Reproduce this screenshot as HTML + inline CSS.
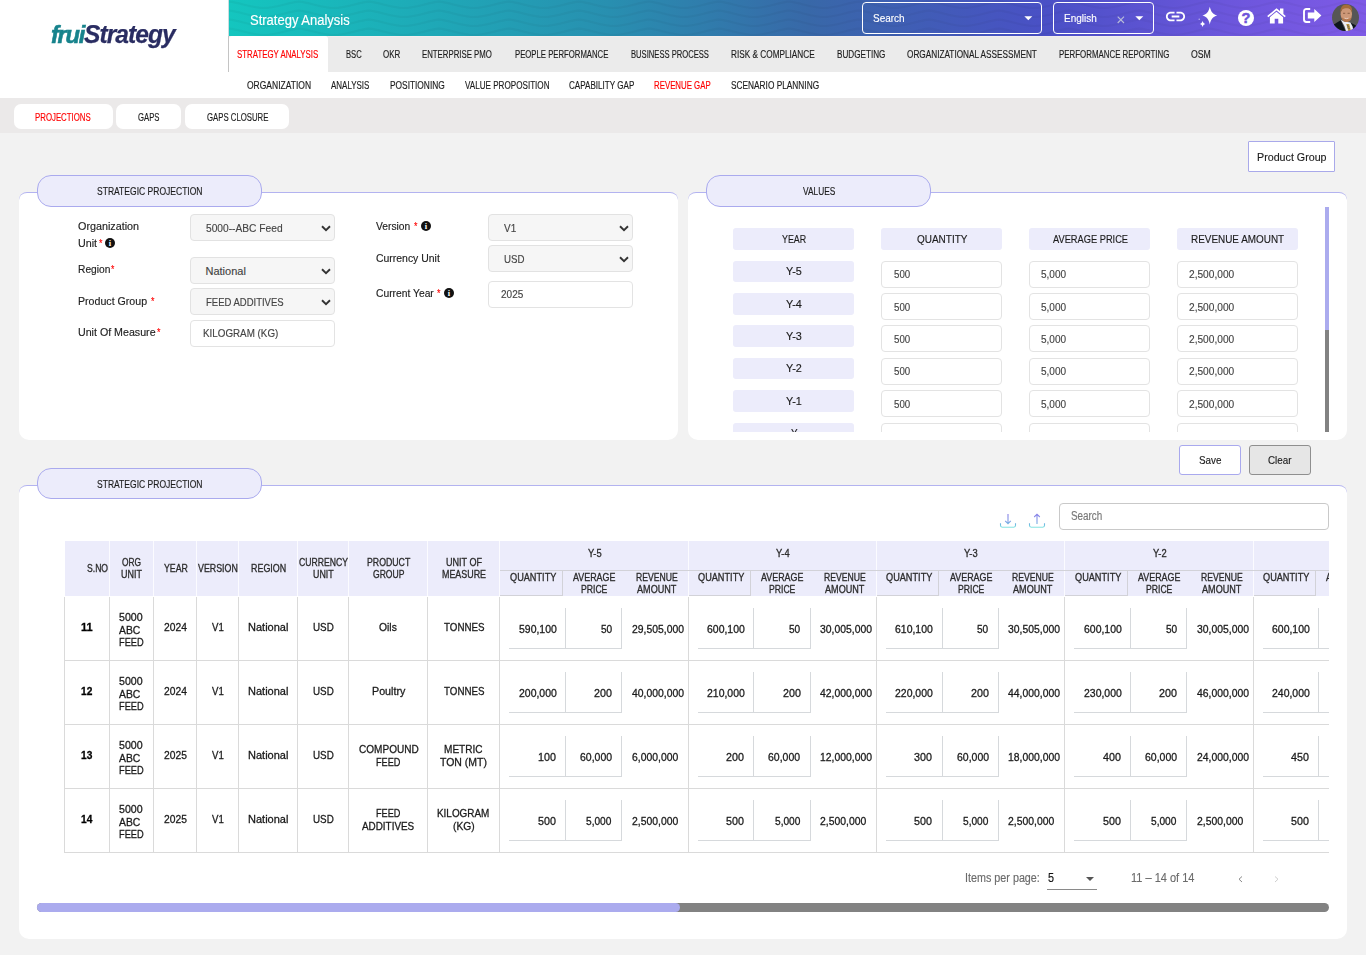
<!DOCTYPE html>
<html lang="en"><head><meta charset="utf-8"><title>fruiStrategy - Strategy Analysis - Revenue Gap</title>
<style>
html,body{margin:0;padding:0}
body{width:1366px;height:955px;overflow:hidden;background:#f2f2f2;position:relative;font-family:"Liberation Sans",sans-serif;}
div,span,a,b,label,h1,th,td,button{position:absolute;box-sizing:border-box;margin:0;padding:0}
.t{white-space:pre;line-height:1;transform-origin:0 0;font-weight:400;text-decoration:none;display:block}
svg{position:absolute;overflow:visible}

.t{-webkit-text-stroke:0.15px currentColor}
.tb .t{-webkit-text-stroke:0.3px currentColor}
.hv .t{-webkit-text-stroke:0.2px currentColor}

.sel{background:#f6f6f6;border:1px solid #e2e2e2;border-radius:4px}
.inp{background:#fff;border:1px solid #e3e3e3;border-radius:4px}
.hd{background:#ececfb;border-radius:3px}
.leg{background:#ececfb;border:1px solid #aaaaee;border-radius:14px}
.card{background:#fff;border-radius:8px 8px 10px 10px;border-top:1px solid #b3b3f0}

</style></head><body>
<header>
<div style="left:0px;top:0px;width:1366px;height:98px;background:#fff;"></div>
<div style="left:229px;top:0px;width:1137px;height:36px;background:linear-gradient(90deg,#14c6bf 0%,#288fb0 33.5%,#3868a8 51%,#4a50c6 72%,#6c56dc 88%,#7e5ae6 100%);"></div>
<div style="left:228px;top:0px;width:1px;height:36px;background:#c9dde0;"></div>
<svg style="left:229px;top:0" width="1137" height="36" viewBox="0 0 1137 36"><defs><pattern id="wv" width="70" height="9" patternUnits="userSpaceOnUse"><path d="M-2 1.5C10 1.5 20 8 35 8S60 1.5 72 1.5" fill="none" stroke="#000" stroke-opacity="0.035" stroke-width="2.2"/><path d="M-2 10.5C10 10.5 20 17 35 17S60 10.5 72 10.5M-2 -7.5C10 -7.5 20 -1 35 -1S60 -7.5 72 -7.5" fill="none" stroke="#000" stroke-opacity="0.035" stroke-width="2.2"/></pattern></defs><rect width="1137" height="36" fill="url(#wv)"/></svg>
<div style="left:229px;top:36px;width:1137px;height:36px;background:#ebebeb;"></div>
<div style="left:228px;top:36px;width:1px;height:36px;background:#c4c4c4;"></div>
<div style="left:229px;top:36px;width:99px;height:36px;background:#fff;border-radius:3px 3px 0 0;"></div>
<div style="left:0px;top:98px;width:1366px;height:35px;background:#ebe9e9;"></div>
<div style="left:328px;top:36px;width:1038px;height:1px;background:#f3eeee;"></div>
<span class="t" style="left:51.30px;top:23.60px;font-size:23.5px;color:#17838c;transform:scaleX(1.0086);font-weight:700;font-style:italic;letter-spacing:-1.3px;-webkit-text-stroke:0.55px #17838c;">frui</span>
<span class="t" style="left:84.40px;top:20.60px;font-size:26px;color:#2a2d62;transform:scaleX(0.9439);font-weight:700;font-style:italic;letter-spacing:-1px;-webkit-text-stroke:0.25px #2a2d62;">Strategy</span>
<h1 class="t" style="left:249.75px;top:13.00px;font-size:14px;color:#fff;transform:scaleX(0.9282);">Strategy Analysis</h1>
<a class="t" style="left:236.75px;top:50.25px;font-size:10px;color:#ff0000;transform:scaleX(0.7861);">STRATEGY ANALYSIS</a>
<a class="t" style="left:346.00px;top:50.25px;font-size:10px;color:#1c1c1c;transform:scaleX(0.7625);">BSC</a>
<a class="t" style="left:383.00px;top:50.25px;font-size:10px;color:#1c1c1c;transform:scaleX(0.7955);">OKR</a>
<a class="t" style="left:422.00px;top:50.25px;font-size:10px;color:#1c1c1c;transform:scaleX(0.7806);">ENTERPRISE PMO</a>
<a class="t" style="left:514.50px;top:50.25px;font-size:10px;color:#1c1c1c;transform:scaleX(0.7744);">PEOPLE PERFORMANCE</a>
<a class="t" style="left:630.75px;top:50.25px;font-size:10px;color:#1c1c1c;transform:scaleX(0.7623);">BUSINESS PROCESS</a>
<a class="t" style="left:731.00px;top:50.25px;font-size:10px;color:#1c1c1c;transform:scaleX(0.8235);">RISK &amp; COMPLIANCE</a>
<a class="t" style="left:837.00px;top:50.25px;font-size:10px;color:#1c1c1c;transform:scaleX(0.8136);">BUDGETING</a>
<a class="t" style="left:906.75px;top:50.25px;font-size:10px;color:#1c1c1c;transform:scaleX(0.8228);">ORGANIZATIONAL ASSESSMENT</a>
<a class="t" style="left:1059.00px;top:50.25px;font-size:10px;color:#1c1c1c;transform:scaleX(0.7893);">PERFORMANCE REPORTING</a>
<a class="t" style="left:1191.00px;top:50.25px;font-size:10px;color:#1c1c1c;transform:scaleX(0.8696);">OSM</a>
<a class="t" style="left:246.75px;top:81.25px;font-size:10px;color:#1c1c1c;transform:scaleX(0.8500);">ORGANIZATION</a>
<a class="t" style="left:331.00px;top:81.25px;font-size:10px;color:#1c1c1c;transform:scaleX(0.7969);">ANALYSIS</a>
<a class="t" style="left:390.00px;top:81.25px;font-size:10px;color:#1c1c1c;transform:scaleX(0.8346);">POSITIONING</a>
<a class="t" style="left:464.50px;top:81.25px;font-size:10px;color:#1c1c1c;transform:scaleX(0.8101);">VALUE PROPOSITION</a>
<a class="t" style="left:568.50px;top:81.25px;font-size:10px;color:#1c1c1c;transform:scaleX(0.8086);">CAPABILITY GAP</a>
<a class="t" style="left:654.00px;top:81.25px;font-size:10px;color:#ff0000;transform:scaleX(0.7847);">REVENUE GAP</a>
<a class="t" style="left:731.00px;top:81.25px;font-size:10px;color:#1c1c1c;transform:scaleX(0.8302);">SCENARIO PLANNING</a>
<div style="left:862px;top:2px;width:180px;height:32px;border:1px solid #fff;border-radius:4px;"></div>
<span class="t" style="left:872.50px;top:13.00px;font-size:11.5px;color:#fff;transform:scaleX(0.8681);">Search</span>
<svg style="left:1024px;top:16px" width="9" height="5"><path d="M0.3 0.3H8.3L4.3 4.3Z" fill="#fff"/></svg>
<div style="left:1053px;top:2px;width:101px;height:32px;border:1px solid #fff;border-radius:4px;"></div>
<span class="t" style="left:1064.00px;top:13.00px;font-size:11.5px;color:#fff;transform:scaleX(0.8684);">English</span>
<svg style="left:1117px;top:16px" width="8" height="8"><path d="M0.7 0.7L7 7M7 0.7L0.7 7" stroke="#b9bdd8" stroke-width="1.1" fill="none"/></svg>
<svg style="left:1135px;top:16px" width="9" height="5"><path d="M0.3 0.3H8.3L4.3 4.3Z" fill="#fff"/></svg>
<svg style="left:1164.2px;top:4.9px" width="23" height="23" viewBox="0 0 24 24"><path fill="#fff" d="M3.9 12c0-1.71 1.39-3.1 3.1-3.1h4V7H7c-2.76 0-5 2.24-5 5s2.24 5 5 5h4v-1.9H7c-1.71 0-3.1-1.39-3.1-3.1zM8 13h8v-2H8v2zm9-6h-4v1.9h4c1.71 0 3.1 1.39 3.1 3.1s-1.39 3.1-3.1 3.1h-4V17h4c2.76 0 5-2.24 5-5s-2.24-5-5-5z"/></svg>
<svg style="left:1196px;top:4px" width="24" height="24" viewBox="0 0 24 24"><path fill="#fff" d="M13.80 2.70C15.06 7.86 16.61 10.09 21.20 11.60C16.61 13.11 15.06 15.34 13.80 20.50C12.54 15.34 10.99 13.11 6.40 11.60C10.99 10.09 12.54 7.86 13.80 2.70Z M6.60 16.70C7.06 18.56 7.63 19.36 9.30 19.90C7.63 20.44 7.06 21.24 6.60 23.10C6.14 21.24 5.57 20.44 3.90 19.90C5.57 19.36 6.14 18.56 6.60 16.70Z"/><circle cx="3.2" cy="15.2" r="0.7" fill="#fff" opacity=".6"/></svg>
<svg style="left:1238px;top:9.8px" width="16" height="16" viewBox="0 0 16 16"><circle cx="8" cy="8" r="8" fill="#fff"/><text x="8" y="13.2" font-size="14.5" font-weight="700" text-anchor="middle" fill="#6e54da" stroke="#6e54da" stroke-width="0.5" font-family="Liberation Sans, sans-serif">?</text></svg>
<svg style="left:1267px;top:7.6px" width="19" height="16" viewBox="0 0 19 16"><path fill="#fff" d="M9.5 0.2L0.2 8L1.3 9.3L9.5 2.5L17.7 9.3L18.8 8L16.4 5.9V0.6H13V3.1Z"/><path fill="#fff" d="M9.5 3.7L2.9 9.2V15.6H7.7V10.8H11.3V15.6H16.1V9.2Z"/></svg>
<svg style="left:1302.6px;top:8.2px" width="19" height="15" viewBox="0 0 19 15"><path fill="none" stroke="#fff" stroke-width="1.9" d="M7.2 1H3.4C2 1 1 2 1 3.4V11.6C1 13 2 14 3.4 14H7.2"/><path fill="#fff" d="M4.8 4.6H11.3V0.9L18.4 7.5L11.3 14.1V10.4H4.8Z"/></svg>
<svg style="left:1332px;top:4px" width="27" height="27" viewBox="0 0 27 27"><defs><clipPath id="av"><circle cx="13.5" cy="13.5" r="13.5"/></clipPath><filter id="bl" x="-10%" y="-10%" width="120%" height="120%"><feGaussianBlur stdDeviation="0.45"/></filter></defs>
<g clip-path="url(#av)"><rect width="27" height="27" fill="#565656"/><g filter="url(#bl)">
<path d="M-1 23L2.2 20.2L8.7 16.2L14 28H-1Z M18.3 18.4L23.9 21.6L28 25V28H15Z" fill="#10141c"/>
<path d="M8.9 15.8L12 17.5L18.4 18.4L20.6 22.5L21.5 27.5H14.2L12.4 22Z" fill="#eceef4"/>
<path d="M14.3 20.1L17.2 20.1L19 27H16.3Z" fill="#b99438"/>
<path d="M15 21.5L17 22.5M15.6 23.8L17.8 24.8" stroke="#3d4a6a" stroke-width="0.7"/>
<ellipse cx="14.3" cy="10.2" rx="5.7" ry="7" fill="#cd9878"/>
<path d="M9.4 12.2C10 17.3 12.3 17.9 14.6 17.9C17 17.9 19.4 16.8 19.8 12.2C18.8 14.6 17 15 14.6 15C12.2 15 10.6 14.6 9.4 12.2Z" fill="#b5794f"/>
<path d="M8.7 9C7.8 3.5 10.6 0.6 14.2 0.5C18.4 0.5 20.9 3.4 20 9C19.5 6.3 18.6 4.8 16.8 4.4C14.5 4 12 4.1 10.4 5.2C9.4 6.1 9 7.4 8.7 9Z" fill="#a66d38"/>
<path d="M11 9.3H13.2M15.6 9.3H17.8" stroke="#7b5238" stroke-width="0.8"/>
<path d="M12.6 14.1Q14.5 15.3 16.4 14.1" stroke="#f3e4dc" stroke-width="0.7" fill="none"/>
</g></g></svg>
</header>
<nav>
<div style="left:14px;top:104px;width:99px;height:25px;background:#fff;border-radius:7px;"></div>
<div style="left:116px;top:104px;width:65px;height:25px;background:#fff;border-radius:7px;"></div>
<div style="left:185px;top:104px;width:104px;height:25px;background:#fff;border-radius:7px;"></div>
<a class="t" style="left:35.10px;top:113.00px;font-size:10px;color:#ff0000;transform:scaleX(0.7831);">PROJECTIONS</a>
<a class="t" style="left:137.90px;top:113.00px;font-size:10px;color:#1c1c1c;transform:scaleX(0.7714);">GAPS</a>
<a class="t" style="left:206.50px;top:113.00px;font-size:10px;color:#1c1c1c;transform:scaleX(0.7785);">GAPS CLOSURE</a>
</nav>
<main>
<div style="left:1248px;top:141px;width:87px;height:31px;background:#fff;border:1px solid #a9a9ea;border-radius:1px;"></div>
<button class="t" style="left:1257.00px;top:152.00px;font-size:11.5px;color:#1c1c1c;transform:scaleX(0.9300);background:none;border:0;font-family:inherit;">Product Group</button>
<section>
<div class="card" style="left:19px;top:192px;width:659px;height:248px;"></div>
<div class="leg" style="left:37px;top:175px;width:225px;height:32px;"></div>
<span class="t" style="left:96.75px;top:187.00px;font-size:10px;color:#1c1c1c;transform:scaleX(0.8528);">STRATEGIC PROJECTION</span>
<label class="t" style="left:78.00px;top:220.50px;font-size:11px;color:#222;transform:scaleX(0.9798);">Organization</label>
<label class="t" style="left:78.00px;top:237.75px;font-size:11px;color:#222;transform:scaleX(0.9750);">Unit</label>
<span class="t" style="left:98.50px;top:237.75px;font-size:11px;color:#ff0000;transform:scaleX(0.8000);">*</span>
<svg style="left:105px;top:238.3px" width="10" height="10" viewBox="0 0 10 10"><circle cx="5" cy="5" r="5" fill="#111"/><text x="5" y="8" font-size="8.6" font-weight="700" text-anchor="middle" fill="#fff" font-family="Liberation Serif, serif">i</text></svg>
<label class="t" style="left:78.00px;top:264.00px;font-size:11px;color:#222;transform:scaleX(0.9286);">Region</label>
<span class="t" style="left:111.30px;top:264.00px;font-size:11px;color:#ff0000;transform:scaleX(0.7800);">*</span>
<label class="t" style="left:78.00px;top:296.00px;font-size:11px;color:#222;transform:scaleX(0.9653);">Product Group</label>
<span class="t" style="left:150.50px;top:296.00px;font-size:11px;color:#ff0000;transform:scaleX(0.8000);">*</span>
<label class="t" style="left:78.00px;top:327.25px;font-size:11px;color:#222;transform:scaleX(0.9688);">Unit Of Measure</label>
<span class="t" style="left:156.50px;top:327.25px;font-size:11px;color:#ff0000;transform:scaleX(0.8000);">*</span>
<div class="sel" style="left:190px;top:214px;width:145px;height:27px;"></div>
<span class="t" style="left:205.50px;top:223.00px;font-size:11px;color:#444;transform:scaleX(0.9277);">5000--ABC Feed</span>
<svg style="left:321px;top:224.5px" width="10" height="7" viewBox="0 0 10 7"><path d="M1 1.2L5 5.1L9 1.2" stroke="#333" stroke-width="1.9" fill="none"/></svg>
<div class="sel" style="left:190px;top:257px;width:145px;height:27px;"></div>
<span class="t" style="left:205.50px;top:266.25px;font-size:11px;color:#444;">National</span>
<svg style="left:321px;top:267.5px" width="10" height="7" viewBox="0 0 10 7"><path d="M1 1.2L5 5.1L9 1.2" stroke="#333" stroke-width="1.9" fill="none"/></svg>
<div class="sel" style="left:190px;top:288px;width:145px;height:27px;"></div>
<span class="t" style="left:205.50px;top:296.75px;font-size:11px;color:#444;transform:scaleX(0.8639);">FEED ADDITIVES</span>
<svg style="left:321px;top:298.5px" width="10" height="7" viewBox="0 0 10 7"><path d="M1 1.2L5 5.1L9 1.2" stroke="#333" stroke-width="1.9" fill="none"/></svg>
<div class="inp" style="left:190px;top:320px;width:145px;height:27px;"></div>
<span class="t" style="left:202.50px;top:327.80px;font-size:11px;color:#444;transform:scaleX(0.8929);">KILOGRAM (KG)</span>
<label class="t" style="left:375.50px;top:220.50px;font-size:11px;color:#222;transform:scaleX(0.9324);">Version</label>
<span class="t" style="left:414.00px;top:220.50px;font-size:11px;color:#ff0000;transform:scaleX(0.8000);">*</span>
<svg style="left:420.8px;top:220.6px" width="10" height="10" viewBox="0 0 10 10"><circle cx="5" cy="5" r="5" fill="#111"/><text x="5" y="8" font-size="8.6" font-weight="700" text-anchor="middle" fill="#fff" font-family="Liberation Serif, serif">i</text></svg>
<label class="t" style="left:375.50px;top:253.00px;font-size:11px;color:#222;transform:scaleX(0.9485);">Currency Unit</label>
<label class="t" style="left:375.50px;top:288.00px;font-size:11px;color:#222;transform:scaleX(0.9355);">Current Year</label>
<span class="t" style="left:437.00px;top:288.00px;font-size:11px;color:#ff0000;transform:scaleX(0.8000);">*</span>
<svg style="left:444.3px;top:288px" width="10" height="10" viewBox="0 0 10 10"><circle cx="5" cy="5" r="5" fill="#111"/><text x="5" y="8" font-size="8.6" font-weight="700" text-anchor="middle" fill="#fff" font-family="Liberation Serif, serif">i</text></svg>
<div class="sel" style="left:488px;top:214px;width:145px;height:27px;"></div>
<span class="t" style="left:503.50px;top:223.00px;font-size:11px;color:#444;transform:scaleX(0.9038);">V1</span>
<svg style="left:619px;top:224.5px" width="10" height="7" viewBox="0 0 10 7"><path d="M1 1.2L5 5.1L9 1.2" stroke="#333" stroke-width="1.9" fill="none"/></svg>
<div class="sel" style="left:488px;top:245px;width:145px;height:27px;"></div>
<span class="t" style="left:503.50px;top:254.00px;font-size:11px;color:#444;transform:scaleX(0.8804);">USD</span>
<svg style="left:619px;top:255.5px" width="10" height="7" viewBox="0 0 10 7"><path d="M1 1.2L5 5.1L9 1.2" stroke="#333" stroke-width="1.9" fill="none"/></svg>
<div class="inp" style="left:488px;top:281px;width:145px;height:27px;"></div>
<span class="t" style="left:500.50px;top:288.50px;font-size:11px;color:#444;transform:scaleX(0.9100);">2025</span>
</section>
<section>
<div class="card" style="left:688px;top:192px;width:659px;height:248px;"></div>
<div class="leg" style="left:706px;top:175px;width:225px;height:32px;"></div>
<span class="t" style="left:803.00px;top:187.00px;font-size:10px;color:#1c1c1c;transform:scaleX(0.8333);">VALUES</span>
<div style="left:688px;top:207px;width:642px;height:224.8px;overflow:hidden">
<div class="hd" style="left:45px;top:21px;width:121px;height:22px;"></div>
<span class="t" style="left:94.25px;top:27.25px;font-size:11px;color:#1c1c1c;transform:scaleX(0.8083);">YEAR</span>
<div class="hd" style="left:193px;top:21px;width:121px;height:22px;"></div>
<span class="t" style="left:228.75px;top:27.25px;font-size:11px;color:#1c1c1c;transform:scaleX(0.9062);">QUANTITY</span>
<div class="hd" style="left:341px;top:21px;width:121px;height:22px;"></div>
<span class="t" style="left:364.50px;top:27.25px;font-size:11px;color:#1c1c1c;transform:scaleX(0.8427);">AVERAGE PRICE</span>
<div class="hd" style="left:489px;top:21px;width:121px;height:22px;"></div>
<span class="t" style="left:503.25px;top:27.25px;font-size:11px;color:#1c1c1c;transform:scaleX(0.9014);">REVENUE AMOUNT</span>
<div class="hd" style="left:45px;top:54px;width:121px;height:21px;"></div>
<span class="t" style="left:98.00px;top:59.00px;font-size:11px;color:#1c1c1c;transform:scaleX(0.9844);">Y-5</span>
<div class="inp" style="left:193px;top:54px;width:121px;height:27px;"></div>
<span class="t" style="left:206.25px;top:62.00px;font-size:11px;color:#444;transform:scaleX(0.8816);">500</span>
<div class="inp" style="left:341px;top:54px;width:121px;height:27px;"></div>
<span class="t" style="left:353.25px;top:62.00px;font-size:11px;color:#444;transform:scaleX(0.9107);">5,000</span>
<div class="inp" style="left:489px;top:54px;width:121px;height:27px;"></div>
<span class="t" style="left:501.25px;top:62.00px;font-size:11px;color:#444;transform:scaleX(0.9235);">2,500,000</span>
<div class="hd" style="left:45px;top:86px;width:121px;height:22px;"></div>
<span class="t" style="left:98.00px;top:92.00px;font-size:11px;color:#1c1c1c;transform:scaleX(0.9844);">Y-4</span>
<div class="inp" style="left:193px;top:86px;width:121px;height:27px;"></div>
<span class="t" style="left:206.25px;top:94.75px;font-size:11px;color:#444;transform:scaleX(0.8816);">500</span>
<div class="inp" style="left:341px;top:86px;width:121px;height:27px;"></div>
<span class="t" style="left:353.25px;top:94.75px;font-size:11px;color:#444;transform:scaleX(0.9107);">5,000</span>
<div class="inp" style="left:489px;top:86px;width:121px;height:27px;"></div>
<span class="t" style="left:501.25px;top:94.75px;font-size:11px;color:#444;transform:scaleX(0.9235);">2,500,000</span>
<div class="hd" style="left:45px;top:118px;width:121px;height:22px;"></div>
<span class="t" style="left:98.00px;top:123.70px;font-size:11px;color:#1c1c1c;transform:scaleX(0.9844);">Y-3</span>
<div class="inp" style="left:193px;top:118px;width:121px;height:27px;"></div>
<span class="t" style="left:206.25px;top:126.50px;font-size:11px;color:#444;transform:scaleX(0.8816);">500</span>
<div class="inp" style="left:341px;top:118px;width:121px;height:27px;"></div>
<span class="t" style="left:353.25px;top:126.50px;font-size:11px;color:#444;transform:scaleX(0.9107);">5,000</span>
<div class="inp" style="left:489px;top:118px;width:121px;height:27px;"></div>
<span class="t" style="left:501.25px;top:126.50px;font-size:11px;color:#444;transform:scaleX(0.9235);">2,500,000</span>
<div class="hd" style="left:45px;top:151px;width:121px;height:21px;"></div>
<span class="t" style="left:98.00px;top:155.60px;font-size:11px;color:#1c1c1c;transform:scaleX(0.9844);">Y-2</span>
<div class="inp" style="left:193px;top:151px;width:121px;height:27px;"></div>
<span class="t" style="left:206.25px;top:159.20px;font-size:11px;color:#444;transform:scaleX(0.8816);">500</span>
<div class="inp" style="left:341px;top:151px;width:121px;height:27px;"></div>
<span class="t" style="left:353.25px;top:159.20px;font-size:11px;color:#444;transform:scaleX(0.9107);">5,000</span>
<div class="inp" style="left:489px;top:151px;width:121px;height:27px;"></div>
<span class="t" style="left:501.25px;top:159.20px;font-size:11px;color:#444;transform:scaleX(0.9235);">2,500,000</span>
<div class="hd" style="left:45px;top:183px;width:121px;height:22px;"></div>
<span class="t" style="left:98.00px;top:188.70px;font-size:11px;color:#1c1c1c;transform:scaleX(0.9844);">Y-1</span>
<div class="inp" style="left:193px;top:183px;width:121px;height:27px;"></div>
<span class="t" style="left:206.25px;top:192.20px;font-size:11px;color:#444;transform:scaleX(0.8816);">500</span>
<div class="inp" style="left:341px;top:183px;width:121px;height:27px;"></div>
<span class="t" style="left:353.25px;top:192.20px;font-size:11px;color:#444;transform:scaleX(0.9107);">5,000</span>
<div class="inp" style="left:489px;top:183px;width:121px;height:27px;"></div>
<span class="t" style="left:501.25px;top:192.20px;font-size:11px;color:#444;transform:scaleX(0.9235);">2,500,000</span>
<div class="hd" style="left:45px;top:216px;width:121px;height:22px;"></div>
<span class="t" style="left:102.75px;top:221.30px;font-size:11px;color:#1c1c1c;transform:scaleX(0.9000);">Y</span>
<div class="inp" style="left:193px;top:216px;width:121px;height:27px;"></div>
<div class="inp" style="left:341px;top:216px;width:121px;height:27px;"></div>
<div class="inp" style="left:489px;top:216px;width:121px;height:27px;"></div>
</div>
<div style="left:1325px;top:207px;width:4px;height:224.5px;background:#828282;"></div>
<div style="left:1325px;top:207px;width:4px;height:122.5px;background:#ababee;"></div>
<div style="left:1179px;top:445px;width:62px;height:30px;background:#fff;border:1px solid #a9a9ee;border-radius:3px;"></div>
<button class="t" style="left:1198.80px;top:455.00px;font-size:11px;color:#1c1c1c;transform:scaleX(0.8960);background:none;border:0;font-family:inherit;">Save</button>
<div style="left:1249px;top:445px;width:62px;height:30px;background:#e6e6e6;border:1px solid #8f8f8f;border-radius:3px;"></div>
<button class="t" style="left:1268.00px;top:455.00px;font-size:11px;color:#1c1c1c;transform:scaleX(0.8926);background:none;border:0;font-family:inherit;">Clear</button>
</section>
<section>
<div class="card" style="left:19px;top:485px;width:1328px;height:454px;"></div>
<div class="leg" style="left:37px;top:468px;width:225px;height:31px;"></div>
<span class="t" style="left:96.75px;top:480.00px;font-size:10px;color:#1c1c1c;transform:scaleX(0.8528);">STRATEGIC PROJECTION</span>
<svg style="left:999px;top:512px" width="48" height="18" viewBox="0 0 48 18"><defs><linearGradient id="gi" gradientUnits="userSpaceOnUse" x1="0" y1="2" x2="0" y2="15.5"><stop offset="0" stop-color="#8a7fe8"/><stop offset="0.55" stop-color="#7f9fe6"/><stop offset="0.8" stop-color="#6fbfe0"/><stop offset="1" stop-color="#86e4e2"/></linearGradient></defs>
<g fill="none" stroke="url(#gi)" stroke-width="1.1"><path d="M1.5 11.2V13.6Q1.5 15.2 3.1 15.2H14.9Q16.5 15.2 16.5 13.6V11.2"/><path d="M9 2V11.6M6.2 8.8L9 11.6L11.8 8.8"/>
<path d="M30.5 11.2V13.6Q30.5 15.2 32.1 15.2H43.9Q45.5 15.2 45.5 13.6V11.2"/><path d="M38 12V2.2M35.2 5L38 2.2L40.8 5"/></g></svg>
<div style="left:1059px;top:503px;width:270px;height:27px;background:#fff;border:1px solid #c9c9c9;border-radius:4px;"></div>
<span class="t" style="left:1071.25px;top:510.00px;font-size:12px;color:#777;transform:scaleX(0.8224);">Search</span>
<div class="tb" style="left:64px;top:541px;width:1265px;height:313px;overflow:hidden">
<div style="left:1px;top:0px;width:1335px;height:55px;background:#ececfb;"></div>
<div style="left:45px;top:0px;width:1px;height:55px;background:#fbfbff;"></div>
<div style="left:89px;top:0px;width:1px;height:55px;background:#fbfbff;"></div>
<div style="left:132px;top:0px;width:1px;height:55px;background:#fbfbff;"></div>
<div style="left:174px;top:0px;width:1px;height:55px;background:#fbfbff;"></div>
<div style="left:233px;top:0px;width:1px;height:55px;background:#fbfbff;"></div>
<div style="left:284px;top:0px;width:1px;height:55px;background:#fbfbff;"></div>
<div style="left:363px;top:0px;width:1px;height:55px;background:#fbfbff;"></div>
<div style="left:435px;top:0px;width:1px;height:55px;background:#fbfbff;"></div>
<div style="left:624px;top:0px;width:1px;height:55px;background:#fbfbff;"></div>
<div style="left:812px;top:0px;width:1px;height:55px;background:#fbfbff;"></div>
<div style="left:1000px;top:0px;width:1px;height:55px;background:#fbfbff;"></div>
<div style="left:1189px;top:0px;width:1px;height:55px;background:#fbfbff;"></div>
<div style="left:1377px;top:0px;width:1px;height:55px;background:#fbfbff;"></div>
<span class="t" style="left:23.00px;top:23.00px;font-size:10px;color:#2b2b2b;transform:scaleX(0.8600);">S.NO</span>
<span class="t" style="left:58.00px;top:17.00px;font-size:10px;color:#2b2b2b;transform:scaleX(0.8370);">ORG</span>
<span class="t" style="left:56.75px;top:29.00px;font-size:10px;color:#2b2b2b;transform:scaleX(0.8958);">UNIT</span>
<span class="t" style="left:99.75px;top:23.00px;font-size:10px;color:#2b2b2b;transform:scaleX(0.8796);">YEAR</span>
<span class="t" style="left:134.00px;top:23.00px;font-size:10px;color:#2b2b2b;transform:scaleX(0.8833);">VERSION</span>
<span class="t" style="left:187.00px;top:23.00px;font-size:10px;color:#2b2b2b;transform:scaleX(0.8910);">REGION</span>
<span class="t" style="left:235.00px;top:17.00px;font-size:10px;color:#2b2b2b;transform:scaleX(0.8640);">CURRENCY</span>
<span class="t" style="left:249.00px;top:29.00px;font-size:10px;color:#2b2b2b;transform:scaleX(0.8854);">UNIT</span>
<span class="t" style="left:302.50px;top:17.00px;font-size:10px;color:#2b2b2b;transform:scaleX(0.8750);">PRODUCT</span>
<span class="t" style="left:308.50px;top:29.00px;font-size:10px;color:#2b2b2b;transform:scaleX(0.8581);">GROUP</span>
<span class="t" style="left:382.00px;top:17.00px;font-size:10px;color:#2b2b2b;transform:scaleX(0.9062);">UNIT OF</span>
<span class="t" style="left:377.75px;top:29.00px;font-size:10px;color:#2b2b2b;transform:scaleX(0.8900);">MEASURE</span>
<div style="left:436px;top:29px;width:189px;height:1px;background:#d2d2d8;"></div>
<div style="left:498px;top:30px;width:1px;height:25px;background:#d2d2d8;"></div>
<div style="left:436px;top:54px;width:62px;height:1px;background:#d2d2d8;"></div>
<span class="t" style="left:523.50px;top:8.00px;font-size:10px;color:#2b2b2b;transform:scaleX(0.9333);">Y-5</span>
<span class="t" style="left:445.75px;top:32.00px;font-size:10px;color:#2b2b2b;transform:scaleX(0.9167);">QUANTITY</span>
<span class="t" style="left:509.00px;top:32.00px;font-size:10px;color:#2b2b2b;transform:scaleX(0.8906);">AVERAGE</span>
<span class="t" style="left:517.00px;top:44.00px;font-size:10px;color:#2b2b2b;transform:scaleX(0.8629);">PRICE</span>
<span class="t" style="left:571.75px;top:32.00px;font-size:10px;color:#2b2b2b;transform:scaleX(0.8622);">REVENUE</span>
<span class="t" style="left:572.75px;top:44.00px;font-size:10px;color:#2b2b2b;transform:scaleX(0.9091);">AMOUNT</span>
<div style="left:625px;top:29px;width:189px;height:1px;background:#d2d2d8;"></div>
<div style="left:686px;top:30px;width:1px;height:25px;background:#d2d2d8;"></div>
<div style="left:625px;top:54px;width:61px;height:1px;background:#d2d2d8;"></div>
<span class="t" style="left:711.80px;top:8.00px;font-size:10px;color:#2b2b2b;transform:scaleX(0.9333);">Y-4</span>
<span class="t" style="left:634.05px;top:32.00px;font-size:10px;color:#2b2b2b;transform:scaleX(0.9167);">QUANTITY</span>
<span class="t" style="left:697.30px;top:32.00px;font-size:10px;color:#2b2b2b;transform:scaleX(0.8906);">AVERAGE</span>
<span class="t" style="left:705.30px;top:44.00px;font-size:10px;color:#2b2b2b;transform:scaleX(0.8629);">PRICE</span>
<span class="t" style="left:760.05px;top:32.00px;font-size:10px;color:#2b2b2b;transform:scaleX(0.8622);">REVENUE</span>
<span class="t" style="left:761.05px;top:44.00px;font-size:10px;color:#2b2b2b;transform:scaleX(0.9091);">AMOUNT</span>
<div style="left:813px;top:29px;width:189px;height:1px;background:#d2d2d8;"></div>
<div style="left:874px;top:30px;width:1px;height:25px;background:#d2d2d8;"></div>
<div style="left:813px;top:54px;width:61px;height:1px;background:#d2d2d8;"></div>
<span class="t" style="left:900.20px;top:8.00px;font-size:10px;color:#2b2b2b;transform:scaleX(0.9333);">Y-3</span>
<span class="t" style="left:822.45px;top:32.00px;font-size:10px;color:#2b2b2b;transform:scaleX(0.9167);">QUANTITY</span>
<span class="t" style="left:885.70px;top:32.00px;font-size:10px;color:#2b2b2b;transform:scaleX(0.8906);">AVERAGE</span>
<span class="t" style="left:893.70px;top:44.00px;font-size:10px;color:#2b2b2b;transform:scaleX(0.8629);">PRICE</span>
<span class="t" style="left:948.45px;top:32.00px;font-size:10px;color:#2b2b2b;transform:scaleX(0.8622);">REVENUE</span>
<span class="t" style="left:949.45px;top:44.00px;font-size:10px;color:#2b2b2b;transform:scaleX(0.9091);">AMOUNT</span>
<div style="left:1001px;top:29px;width:189px;height:1px;background:#d2d2d8;"></div>
<div style="left:1063px;top:30px;width:1px;height:25px;background:#d2d2d8;"></div>
<div style="left:1001px;top:54px;width:62px;height:1px;background:#d2d2d8;"></div>
<span class="t" style="left:1088.50px;top:8.00px;font-size:10px;color:#2b2b2b;transform:scaleX(0.9333);">Y-2</span>
<span class="t" style="left:1010.75px;top:32.00px;font-size:10px;color:#2b2b2b;transform:scaleX(0.9167);">QUANTITY</span>
<span class="t" style="left:1074.00px;top:32.00px;font-size:10px;color:#2b2b2b;transform:scaleX(0.8906);">AVERAGE</span>
<span class="t" style="left:1082.00px;top:44.00px;font-size:10px;color:#2b2b2b;transform:scaleX(0.8629);">PRICE</span>
<span class="t" style="left:1136.75px;top:32.00px;font-size:10px;color:#2b2b2b;transform:scaleX(0.8622);">REVENUE</span>
<span class="t" style="left:1137.75px;top:44.00px;font-size:10px;color:#2b2b2b;transform:scaleX(0.9091);">AMOUNT</span>
<div style="left:1190px;top:29px;width:189px;height:1px;background:#d2d2d8;"></div>
<div style="left:1251px;top:30px;width:1px;height:25px;background:#d2d2d8;"></div>
<div style="left:1190px;top:54px;width:61px;height:1px;background:#d2d2d8;"></div>
<span class="t" style="left:1276.80px;top:8.00px;font-size:10px;color:#2b2b2b;transform:scaleX(0.9333);">Y-1</span>
<span class="t" style="left:1199.05px;top:32.00px;font-size:10px;color:#2b2b2b;transform:scaleX(0.9167);">QUANTITY</span>
<span class="t" style="left:1262.30px;top:32.00px;font-size:10px;color:#2b2b2b;transform:scaleX(0.8906);">AVERAGE</span>
<span class="t" style="left:1270.30px;top:44.00px;font-size:10px;color:#2b2b2b;transform:scaleX(0.8629);">PRICE</span>
<span class="t" style="left:1325.05px;top:32.00px;font-size:10px;color:#2b2b2b;transform:scaleX(0.8622);">REVENUE</span>
<span class="t" style="left:1326.05px;top:44.00px;font-size:10px;color:#2b2b2b;transform:scaleX(0.9091);">AMOUNT</span>
<div style="left:1378px;top:29px;width:189px;height:1px;background:#d2d2d8;"></div>
<div style="left:1439px;top:30px;width:1px;height:25px;background:#d2d2d8;"></div>
<div style="left:1378px;top:54px;width:61px;height:1px;background:#d2d2d8;"></div>
<span class="t" style="left:1465.10px;top:8.00px;font-size:10px;color:#2b2b2b;transform:scaleX(2.0000);">Y</span>
<span class="t" style="left:1387.35px;top:32.00px;font-size:10px;color:#2b2b2b;transform:scaleX(0.9167);">QUANTITY</span>
<span class="t" style="left:1450.60px;top:32.00px;font-size:10px;color:#2b2b2b;transform:scaleX(0.8906);">AVERAGE</span>
<span class="t" style="left:1458.60px;top:44.00px;font-size:10px;color:#2b2b2b;transform:scaleX(0.8629);">PRICE</span>
<span class="t" style="left:1513.35px;top:32.00px;font-size:10px;color:#2b2b2b;transform:scaleX(0.8622);">REVENUE</span>
<span class="t" style="left:1514.35px;top:44.00px;font-size:10px;color:#2b2b2b;transform:scaleX(0.9091);">AMOUNT</span>
<div style="left:0px;top:56px;width:1px;height:256px;background:#dadada;"></div>
<div style="left:45px;top:56px;width:1px;height:256px;background:#dadada;"></div>
<div style="left:89px;top:56px;width:1px;height:256px;background:#dadada;"></div>
<div style="left:132px;top:56px;width:1px;height:256px;background:#dadada;"></div>
<div style="left:174px;top:56px;width:1px;height:256px;background:#dadada;"></div>
<div style="left:233px;top:56px;width:1px;height:256px;background:#dadada;"></div>
<div style="left:284px;top:56px;width:1px;height:256px;background:#dadada;"></div>
<div style="left:363px;top:56px;width:1px;height:256px;background:#dadada;"></div>
<div style="left:435px;top:56px;width:1px;height:256px;background:#dadada;"></div>
<div style="left:624px;top:56px;width:1px;height:256px;background:#dadada;"></div>
<div style="left:812px;top:56px;width:1px;height:256px;background:#dadada;"></div>
<div style="left:1000px;top:56px;width:1px;height:256px;background:#dadada;"></div>
<div style="left:1189px;top:56px;width:1px;height:256px;background:#dadada;"></div>
<div style="left:1377px;top:56px;width:1px;height:256px;background:#dadada;"></div>
<div style="left:0px;top:119px;width:1336px;height:1px;background:#dadada;"></div>
<div style="left:0px;top:183px;width:1336px;height:1px;background:#dadada;"></div>
<div style="left:0px;top:247px;width:1336px;height:1px;background:#dadada;"></div>
<div style="left:0px;top:311px;width:1336px;height:1px;background:#dadada;"></div>
<span class="t" style="left:17.00px;top:80.80px;font-size:11.5px;color:#000;transform:scaleX(0.9583);font-weight:700;">11</span>
<span class="t" style="left:55.25px;top:71.25px;font-size:11.5px;color:#1a1a1a;transform:scaleX(0.9231);">5000</span>
<span class="t" style="left:55.25px;top:83.75px;font-size:11.5px;color:#1a1a1a;transform:scaleX(0.9022);">ABC</span>
<span class="t" style="left:55.25px;top:96.25px;font-size:11.5px;color:#1a1a1a;transform:scaleX(0.8065);">FEED</span>
<span class="t" style="left:100.00px;top:80.80px;font-size:11.5px;color:#1a1a1a;transform:scaleX(0.8942);">2024</span>
<span class="t" style="left:147.50px;top:80.80px;font-size:11.5px;color:#1a1a1a;transform:scaleX(0.8393);">V1</span>
<span class="t" style="left:184.00px;top:80.80px;font-size:11.5px;color:#1a1a1a;transform:scaleX(0.9571);">National</span>
<span class="t" style="left:249.25px;top:80.80px;font-size:11.5px;color:#1a1a1a;transform:scaleX(0.8542);">USD</span>
<span class="t" style="left:315.25px;top:80.80px;font-size:11.5px;color:#1a1a1a;transform:scaleX(0.9000);">Oils</span>
<span class="t" style="left:379.75px;top:80.80px;font-size:11.5px;color:#1a1a1a;transform:scaleX(0.8490);">TONNES</span>
<div style="left:445px;top:107px;width:113px;height:1px;background:#d6d9dc;"></div>
<div style="left:501px;top:67px;width:1px;height:40px;background:#d6d9dc;"></div>
<div style="left:557px;top:67px;width:1px;height:40px;background:#d6d9dc;"></div>
<span class="t" style="left:454.70px;top:83.00px;font-size:11.5px;color:#1a1a1a;transform:scaleX(0.9095);">590,100</span>
<span class="t" style="left:536.60px;top:83.00px;font-size:11.5px;color:#1a1a1a;transform:scaleX(0.8769);">50</span>
<span class="t" style="left:567.50px;top:83.00px;font-size:11.5px;color:#1a1a1a;transform:scaleX(0.9034);">29,505,000</span>
<div style="left:634px;top:107px;width:113px;height:1px;background:#d6d9dc;"></div>
<div style="left:689px;top:67px;width:1px;height:40px;background:#d6d9dc;"></div>
<div style="left:746px;top:67px;width:1px;height:40px;background:#d6d9dc;"></div>
<span class="t" style="left:643.00px;top:83.00px;font-size:11.5px;color:#1a1a1a;transform:scaleX(0.9095);">600,100</span>
<span class="t" style="left:724.90px;top:83.00px;font-size:11.5px;color:#1a1a1a;transform:scaleX(0.8769);">50</span>
<span class="t" style="left:755.80px;top:83.00px;font-size:11.5px;color:#1a1a1a;transform:scaleX(0.9034);">30,005,000</span>
<div style="left:822px;top:107px;width:113px;height:1px;background:#d6d9dc;"></div>
<div style="left:878px;top:67px;width:1px;height:40px;background:#d6d9dc;"></div>
<div style="left:934px;top:67px;width:1px;height:40px;background:#d6d9dc;"></div>
<span class="t" style="left:831.40px;top:83.00px;font-size:11.5px;color:#1a1a1a;transform:scaleX(0.9095);">610,100</span>
<span class="t" style="left:913.30px;top:83.00px;font-size:11.5px;color:#1a1a1a;transform:scaleX(0.8769);">50</span>
<span class="t" style="left:944.20px;top:83.00px;font-size:11.5px;color:#1a1a1a;transform:scaleX(0.9034);">30,505,000</span>
<div style="left:1010px;top:107px;width:113px;height:1px;background:#d6d9dc;"></div>
<div style="left:1066px;top:67px;width:1px;height:40px;background:#d6d9dc;"></div>
<div style="left:1122px;top:67px;width:1px;height:40px;background:#d6d9dc;"></div>
<span class="t" style="left:1019.70px;top:83.00px;font-size:11.5px;color:#1a1a1a;transform:scaleX(0.9095);">600,100</span>
<span class="t" style="left:1101.60px;top:83.00px;font-size:11.5px;color:#1a1a1a;transform:scaleX(0.8769);">50</span>
<span class="t" style="left:1132.50px;top:83.00px;font-size:11.5px;color:#1a1a1a;transform:scaleX(0.9034);">30,005,000</span>
<div style="left:1199px;top:107px;width:113px;height:1px;background:#d6d9dc;"></div>
<div style="left:1254px;top:67px;width:1px;height:40px;background:#d6d9dc;"></div>
<div style="left:1311px;top:67px;width:1px;height:40px;background:#d6d9dc;"></div>
<span class="t" style="left:1208.00px;top:83.00px;font-size:11.5px;color:#1a1a1a;transform:scaleX(0.9095);">600,100</span>
<span class="t" style="left:1289.90px;top:83.00px;font-size:11.5px;color:#1a1a1a;transform:scaleX(0.8769);">50</span>
<span class="t" style="left:1320.80px;top:83.00px;font-size:11.5px;color:#1a1a1a;transform:scaleX(0.9034);">30,005,000</span>
<span class="t" style="left:17.00px;top:144.80px;font-size:11.5px;color:#000;transform:scaleX(0.8846);font-weight:700;">12</span>
<span class="t" style="left:55.25px;top:135.25px;font-size:11.5px;color:#1a1a1a;transform:scaleX(0.9231);">5000</span>
<span class="t" style="left:55.25px;top:147.75px;font-size:11.5px;color:#1a1a1a;transform:scaleX(0.9022);">ABC</span>
<span class="t" style="left:55.25px;top:160.25px;font-size:11.5px;color:#1a1a1a;transform:scaleX(0.8065);">FEED</span>
<span class="t" style="left:100.00px;top:144.80px;font-size:11.5px;color:#1a1a1a;transform:scaleX(0.8942);">2024</span>
<span class="t" style="left:147.50px;top:144.80px;font-size:11.5px;color:#1a1a1a;transform:scaleX(0.8393);">V1</span>
<span class="t" style="left:184.00px;top:144.80px;font-size:11.5px;color:#1a1a1a;transform:scaleX(0.9571);">National</span>
<span class="t" style="left:249.25px;top:144.80px;font-size:11.5px;color:#1a1a1a;transform:scaleX(0.8542);">USD</span>
<span class="t" style="left:307.50px;top:144.80px;font-size:11.5px;color:#1a1a1a;transform:scaleX(0.9306);">Poultry</span>
<span class="t" style="left:379.75px;top:144.80px;font-size:11.5px;color:#1a1a1a;transform:scaleX(0.8490);">TONNES</span>
<div style="left:445px;top:171px;width:113px;height:1px;background:#d6d9dc;"></div>
<div style="left:501px;top:131px;width:1px;height:40px;background:#d6d9dc;"></div>
<div style="left:557px;top:131px;width:1px;height:40px;background:#d6d9dc;"></div>
<span class="t" style="left:454.70px;top:147.00px;font-size:11.5px;color:#1a1a1a;transform:scaleX(0.9095);">200,000</span>
<span class="t" style="left:530.30px;top:147.00px;font-size:11.5px;color:#1a1a1a;transform:scaleX(0.9316);">200</span>
<span class="t" style="left:567.50px;top:147.00px;font-size:11.5px;color:#1a1a1a;transform:scaleX(0.9034);">40,000,000</span>
<div style="left:634px;top:171px;width:113px;height:1px;background:#d6d9dc;"></div>
<div style="left:689px;top:131px;width:1px;height:40px;background:#d6d9dc;"></div>
<div style="left:746px;top:131px;width:1px;height:40px;background:#d6d9dc;"></div>
<span class="t" style="left:643.00px;top:147.00px;font-size:11.5px;color:#1a1a1a;transform:scaleX(0.9095);">210,000</span>
<span class="t" style="left:718.60px;top:147.00px;font-size:11.5px;color:#1a1a1a;transform:scaleX(0.9316);">200</span>
<span class="t" style="left:755.80px;top:147.00px;font-size:11.5px;color:#1a1a1a;transform:scaleX(0.9034);">42,000,000</span>
<div style="left:822px;top:171px;width:113px;height:1px;background:#d6d9dc;"></div>
<div style="left:878px;top:131px;width:1px;height:40px;background:#d6d9dc;"></div>
<div style="left:934px;top:131px;width:1px;height:40px;background:#d6d9dc;"></div>
<span class="t" style="left:831.40px;top:147.00px;font-size:11.5px;color:#1a1a1a;transform:scaleX(0.9095);">220,000</span>
<span class="t" style="left:907.00px;top:147.00px;font-size:11.5px;color:#1a1a1a;transform:scaleX(0.9316);">200</span>
<span class="t" style="left:944.20px;top:147.00px;font-size:11.5px;color:#1a1a1a;transform:scaleX(0.9034);">44,000,000</span>
<div style="left:1010px;top:171px;width:113px;height:1px;background:#d6d9dc;"></div>
<div style="left:1066px;top:131px;width:1px;height:40px;background:#d6d9dc;"></div>
<div style="left:1122px;top:131px;width:1px;height:40px;background:#d6d9dc;"></div>
<span class="t" style="left:1019.70px;top:147.00px;font-size:11.5px;color:#1a1a1a;transform:scaleX(0.9095);">230,000</span>
<span class="t" style="left:1095.30px;top:147.00px;font-size:11.5px;color:#1a1a1a;transform:scaleX(0.9316);">200</span>
<span class="t" style="left:1132.50px;top:147.00px;font-size:11.5px;color:#1a1a1a;transform:scaleX(0.9034);">46,000,000</span>
<div style="left:1199px;top:171px;width:113px;height:1px;background:#d6d9dc;"></div>
<div style="left:1254px;top:131px;width:1px;height:40px;background:#d6d9dc;"></div>
<div style="left:1311px;top:131px;width:1px;height:40px;background:#d6d9dc;"></div>
<span class="t" style="left:1208.00px;top:147.00px;font-size:11.5px;color:#1a1a1a;transform:scaleX(0.9095);">240,000</span>
<span class="t" style="left:1283.60px;top:147.00px;font-size:11.5px;color:#1a1a1a;transform:scaleX(0.9316);">200</span>
<span class="t" style="left:1320.80px;top:147.00px;font-size:11.5px;color:#1a1a1a;transform:scaleX(0.9034);">48,000,000</span>
<span class="t" style="left:17.00px;top:208.80px;font-size:11.5px;color:#000;transform:scaleX(0.8846);font-weight:700;">13</span>
<span class="t" style="left:55.25px;top:199.25px;font-size:11.5px;color:#1a1a1a;transform:scaleX(0.9231);">5000</span>
<span class="t" style="left:55.25px;top:211.75px;font-size:11.5px;color:#1a1a1a;transform:scaleX(0.9022);">ABC</span>
<span class="t" style="left:55.25px;top:224.25px;font-size:11.5px;color:#1a1a1a;transform:scaleX(0.8065);">FEED</span>
<span class="t" style="left:100.00px;top:208.80px;font-size:11.5px;color:#1a1a1a;transform:scaleX(0.8942);">2025</span>
<span class="t" style="left:147.50px;top:208.80px;font-size:11.5px;color:#1a1a1a;transform:scaleX(0.8393);">V1</span>
<span class="t" style="left:184.00px;top:208.80px;font-size:11.5px;color:#1a1a1a;transform:scaleX(0.9571);">National</span>
<span class="t" style="left:249.25px;top:208.80px;font-size:11.5px;color:#1a1a1a;transform:scaleX(0.8542);">USD</span>
<span class="t" style="left:294.70px;top:203.20px;font-size:11.5px;color:#1a1a1a;transform:scaleX(0.8735);">COMPOUND</span>
<span class="t" style="left:311.70px;top:215.90px;font-size:11.5px;color:#1a1a1a;transform:scaleX(0.7968);">FEED</span>
<span class="t" style="left:380.30px;top:203.20px;font-size:11.5px;color:#1a1a1a;transform:scaleX(0.8750);">METRIC</span>
<span class="t" style="left:376.30px;top:215.90px;font-size:11.5px;color:#1a1a1a;transform:scaleX(0.9118);">TON (MT)</span>
<div style="left:445px;top:235px;width:113px;height:1px;background:#d6d9dc;"></div>
<div style="left:501px;top:195px;width:1px;height:40px;background:#d6d9dc;"></div>
<div style="left:557px;top:195px;width:1px;height:40px;background:#d6d9dc;"></div>
<span class="t" style="left:473.60px;top:211.00px;font-size:11.5px;color:#1a1a1a;transform:scaleX(0.9316);">100</span>
<span class="t" style="left:516.10px;top:211.00px;font-size:11.5px;color:#1a1a1a;transform:scaleX(0.9114);">60,000</span>
<span class="t" style="left:567.50px;top:211.00px;font-size:11.5px;color:#1a1a1a;transform:scaleX(0.9039);">6,000,000</span>
<div style="left:634px;top:235px;width:113px;height:1px;background:#d6d9dc;"></div>
<div style="left:689px;top:195px;width:1px;height:40px;background:#d6d9dc;"></div>
<div style="left:746px;top:195px;width:1px;height:40px;background:#d6d9dc;"></div>
<span class="t" style="left:661.90px;top:211.00px;font-size:11.5px;color:#1a1a1a;transform:scaleX(0.9316);">200</span>
<span class="t" style="left:704.40px;top:211.00px;font-size:11.5px;color:#1a1a1a;transform:scaleX(0.9114);">60,000</span>
<span class="t" style="left:755.80px;top:211.00px;font-size:11.5px;color:#1a1a1a;transform:scaleX(0.9034);">12,000,000</span>
<div style="left:822px;top:235px;width:113px;height:1px;background:#d6d9dc;"></div>
<div style="left:878px;top:195px;width:1px;height:40px;background:#d6d9dc;"></div>
<div style="left:934px;top:195px;width:1px;height:40px;background:#d6d9dc;"></div>
<span class="t" style="left:850.30px;top:211.00px;font-size:11.5px;color:#1a1a1a;transform:scaleX(0.9316);">300</span>
<span class="t" style="left:892.80px;top:211.00px;font-size:11.5px;color:#1a1a1a;transform:scaleX(0.9114);">60,000</span>
<span class="t" style="left:944.20px;top:211.00px;font-size:11.5px;color:#1a1a1a;transform:scaleX(0.9034);">18,000,000</span>
<div style="left:1010px;top:235px;width:113px;height:1px;background:#d6d9dc;"></div>
<div style="left:1066px;top:195px;width:1px;height:40px;background:#d6d9dc;"></div>
<div style="left:1122px;top:195px;width:1px;height:40px;background:#d6d9dc;"></div>
<span class="t" style="left:1038.60px;top:211.00px;font-size:11.5px;color:#1a1a1a;transform:scaleX(0.9316);">400</span>
<span class="t" style="left:1081.10px;top:211.00px;font-size:11.5px;color:#1a1a1a;transform:scaleX(0.9114);">60,000</span>
<span class="t" style="left:1132.50px;top:211.00px;font-size:11.5px;color:#1a1a1a;transform:scaleX(0.9034);">24,000,000</span>
<div style="left:1199px;top:235px;width:113px;height:1px;background:#d6d9dc;"></div>
<div style="left:1254px;top:195px;width:1px;height:40px;background:#d6d9dc;"></div>
<div style="left:1311px;top:195px;width:1px;height:40px;background:#d6d9dc;"></div>
<span class="t" style="left:1226.90px;top:211.00px;font-size:11.5px;color:#1a1a1a;transform:scaleX(0.9316);">450</span>
<span class="t" style="left:1269.40px;top:211.00px;font-size:11.5px;color:#1a1a1a;transform:scaleX(0.9114);">60,000</span>
<span class="t" style="left:1320.80px;top:211.00px;font-size:11.5px;color:#1a1a1a;transform:scaleX(0.9034);">27,000,000</span>
<span class="t" style="left:17.00px;top:272.80px;font-size:11.5px;color:#000;transform:scaleX(0.8846);font-weight:700;">14</span>
<span class="t" style="left:55.25px;top:263.25px;font-size:11.5px;color:#1a1a1a;transform:scaleX(0.9231);">5000</span>
<span class="t" style="left:55.25px;top:275.75px;font-size:11.5px;color:#1a1a1a;transform:scaleX(0.9022);">ABC</span>
<span class="t" style="left:55.25px;top:288.25px;font-size:11.5px;color:#1a1a1a;transform:scaleX(0.8065);">FEED</span>
<span class="t" style="left:100.00px;top:272.80px;font-size:11.5px;color:#1a1a1a;transform:scaleX(0.8942);">2025</span>
<span class="t" style="left:147.50px;top:272.80px;font-size:11.5px;color:#1a1a1a;transform:scaleX(0.8393);">V1</span>
<span class="t" style="left:184.00px;top:272.80px;font-size:11.5px;color:#1a1a1a;transform:scaleX(0.9571);">National</span>
<span class="t" style="left:249.25px;top:272.80px;font-size:11.5px;color:#1a1a1a;transform:scaleX(0.8542);">USD</span>
<span class="t" style="left:311.70px;top:267.20px;font-size:11.5px;color:#1a1a1a;transform:scaleX(0.7968);">FEED</span>
<span class="t" style="left:298.20px;top:279.90px;font-size:11.5px;color:#1a1a1a;transform:scaleX(0.8590);">ADDITIVES</span>
<span class="t" style="left:373.40px;top:267.20px;font-size:11.5px;color:#1a1a1a;transform:scaleX(0.8623);">KILOGRAM</span>
<span class="t" style="left:389.10px;top:279.90px;font-size:11.5px;color:#1a1a1a;transform:scaleX(0.8917);">(KG)</span>
<div style="left:445px;top:299px;width:113px;height:1px;background:#d6d9dc;"></div>
<div style="left:501px;top:259px;width:1px;height:40px;background:#d6d9dc;"></div>
<div style="left:557px;top:259px;width:1px;height:40px;background:#d6d9dc;"></div>
<span class="t" style="left:473.60px;top:275.00px;font-size:11.5px;color:#1a1a1a;transform:scaleX(0.9316);">500</span>
<span class="t" style="left:522.40px;top:275.00px;font-size:11.5px;color:#1a1a1a;transform:scaleX(0.8828);">5,000</span>
<span class="t" style="left:567.50px;top:275.00px;font-size:11.5px;color:#1a1a1a;transform:scaleX(0.9039);">2,500,000</span>
<div style="left:634px;top:299px;width:113px;height:1px;background:#d6d9dc;"></div>
<div style="left:689px;top:259px;width:1px;height:40px;background:#d6d9dc;"></div>
<div style="left:746px;top:259px;width:1px;height:40px;background:#d6d9dc;"></div>
<span class="t" style="left:661.90px;top:275.00px;font-size:11.5px;color:#1a1a1a;transform:scaleX(0.9316);">500</span>
<span class="t" style="left:710.70px;top:275.00px;font-size:11.5px;color:#1a1a1a;transform:scaleX(0.8828);">5,000</span>
<span class="t" style="left:755.80px;top:275.00px;font-size:11.5px;color:#1a1a1a;transform:scaleX(0.9039);">2,500,000</span>
<div style="left:822px;top:299px;width:113px;height:1px;background:#d6d9dc;"></div>
<div style="left:878px;top:259px;width:1px;height:40px;background:#d6d9dc;"></div>
<div style="left:934px;top:259px;width:1px;height:40px;background:#d6d9dc;"></div>
<span class="t" style="left:850.30px;top:275.00px;font-size:11.5px;color:#1a1a1a;transform:scaleX(0.9316);">500</span>
<span class="t" style="left:899.10px;top:275.00px;font-size:11.5px;color:#1a1a1a;transform:scaleX(0.8828);">5,000</span>
<span class="t" style="left:944.20px;top:275.00px;font-size:11.5px;color:#1a1a1a;transform:scaleX(0.9039);">2,500,000</span>
<div style="left:1010px;top:299px;width:113px;height:1px;background:#d6d9dc;"></div>
<div style="left:1066px;top:259px;width:1px;height:40px;background:#d6d9dc;"></div>
<div style="left:1122px;top:259px;width:1px;height:40px;background:#d6d9dc;"></div>
<span class="t" style="left:1038.60px;top:275.00px;font-size:11.5px;color:#1a1a1a;transform:scaleX(0.9316);">500</span>
<span class="t" style="left:1087.40px;top:275.00px;font-size:11.5px;color:#1a1a1a;transform:scaleX(0.8828);">5,000</span>
<span class="t" style="left:1132.50px;top:275.00px;font-size:11.5px;color:#1a1a1a;transform:scaleX(0.9039);">2,500,000</span>
<div style="left:1199px;top:299px;width:113px;height:1px;background:#d6d9dc;"></div>
<div style="left:1254px;top:259px;width:1px;height:40px;background:#d6d9dc;"></div>
<div style="left:1311px;top:259px;width:1px;height:40px;background:#d6d9dc;"></div>
<span class="t" style="left:1226.90px;top:275.00px;font-size:11.5px;color:#1a1a1a;transform:scaleX(0.9316);">500</span>
<span class="t" style="left:1275.70px;top:275.00px;font-size:11.5px;color:#1a1a1a;transform:scaleX(0.8828);">5,000</span>
<span class="t" style="left:1320.80px;top:275.00px;font-size:11.5px;color:#1a1a1a;transform:scaleX(0.9039);">2,500,000</span>
</div>
<span class="t" style="left:965.30px;top:872.00px;font-size:12px;color:#6b6b6b;transform:scaleX(0.8976);">Items per page:</span>
<span class="t" style="left:1048.40px;top:872.00px;font-size:12px;color:#111;transform:scaleX(0.9000);">5</span>
<div style="left:1047px;top:889px;width:50px;height:1px;background:#8a8a8a;"></div>
<svg style="left:1086.3px;top:877px" width="8" height="4"><path d="M0 0H8L4 4Z" fill="#555"/></svg>
<span class="t" style="left:1130.50px;top:872.00px;font-size:12px;color:#6b6b6b;transform:scaleX(0.9174);">11 – 14 of 14</span>
<svg style="left:1238px;top:875.5px" width="5" height="7"><path d="M4 0.5L1 3.2L4 6" stroke="#8a8a8a" stroke-width="1" fill="none"/></svg>
<svg style="left:1274px;top:875.5px" width="5" height="7"><path d="M1 0.5L4 3.2L1 6" stroke="#cfcfcf" stroke-width="1" fill="none"/></svg>
<div style="left:37px;top:903px;width:1292px;height:9px;background:#828282;border-radius:4.5px;"></div>
<div style="left:37px;top:903px;width:643.3px;height:9px;background:#ababee;border-radius:4.5px;"></div>
</section>
</main>
</body></html>
